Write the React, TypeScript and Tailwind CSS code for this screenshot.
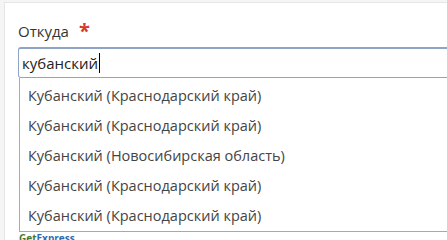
export default function App() {
  const options = [
    "Кубанский (Краснодарский край)",
    "Кубанский (Краснодарский край)",
    "Кубанский (Новосибирская область)",
    "Кубанский (Краснодарский край)",
    "Кубанский (Краснодарский край)",
  ];

  return (
    <div className="h-[240px] w-[447px] overflow-hidden bg-[#f5f5f5] pt-[2px] pl-[4px] font-['Open_Sans',sans-serif]">
      <div className="h-[300px] border-t border-l border-[#e6e6e6] bg-white pl-[13px] pt-[17px]">
        {/* Label */}
        <div className="flex items-start gap-[10px] text-[15px] leading-[22px] text-[#333]">
          <span>Откуда</span>
          <span className="mt-[1px] text-[20px] leading-[20px] font-bold text-[#d8392b]">*</span>
        </div>

        {/* Input + dropdown */}
        <div className="relative mt-[5px]">
          <div className="flex h-[31px] w-[460px] items-center rounded-l-[3px] border border-t-2 border-[#8fa3c4] pl-[3px] text-[15px] text-[#222]">
            <span>кубанский</span>
            <span className="ml-[1px] h-[20px] w-px bg-black" />
          </div>
          <ul className="absolute left-[1px] top-[31px] w-[460px] border-l border-b border-[#a9a9a9] bg-white pt-[3px]">
            {options.map((o, i) => (
              <li key={i} className="flex h-[30px] items-center pl-[8px] text-[14.5px] text-[#444]">
                {o}
              </li>
            ))}
          </ul>
          <div className="mt-[154px] pl-[1px] text-[10px] font-bold leading-[12px] text-[#3f7a3a]">
            Get<span className="text-[#2f6db0]">Express</span>
          </div>
        </div>
      </div>
    </div>
  );
}
